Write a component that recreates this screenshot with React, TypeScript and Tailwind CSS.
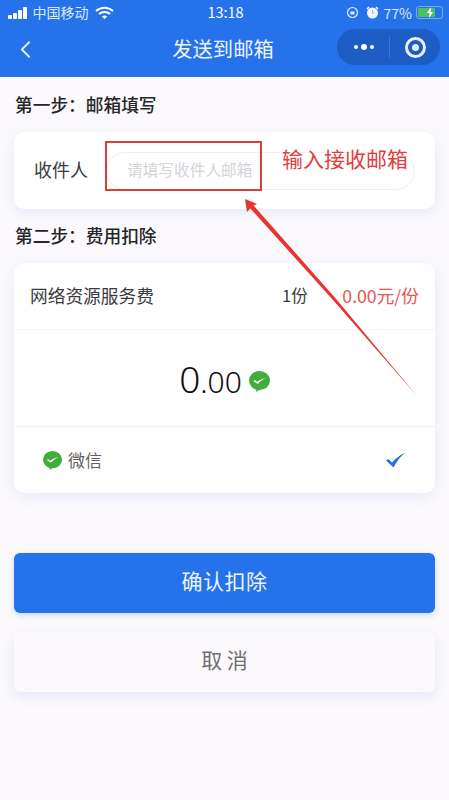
import { ChevronLeft } from "lucide-react";

const font = { fontFamily: '"Noto Sans CJK SC", "Noto Sans", sans-serif' };

function WechatIcon({ size }: { size: number }) {
  return (
    <svg width={size} height={size} viewBox="0 0 22 22" className="shrink-0">
      <ellipse cx="11" cy="10" rx="11" ry="10" fill="#3fae3a" />
      <path d="M8 17l-.5 5 5.500-3.500z" fill="#3fae3a" />
      <path d="M4.500 10.500l1.500-1 2.500 1.800c2.800-2 5.500-3.200 9.500-4.300-3.600 1.800-6.300 3.800-9 6.700z" fill="#fff" />
    </svg>
  );
}

function StatusBar() {
  return (
    <div className="flex h-[25px] items-center justify-between pl-[8px] pr-[6px] text-[14px] leading-none text-[#dce8fc]">
      <div className="flex w-[150px] items-center">
        <div className="flex items-end gap-[1.500px]">
          <span className="h-[4px] w-[3.500px] rounded-[1px] bg-white" />
          <span className="h-[6px] w-[3.500px] rounded-[1px] bg-white" />
          <span className="h-[9px] w-[3.500px] rounded-[1px] bg-white" />
          <span className="h-[12px] w-[3.500px] rounded-[1px] bg-white" />
        </div>
        <span className="ml-[6px] mb-[1px]">中国移动</span>
        <svg width="19" height="14" viewBox="0 0 19 14" className="ml-[6px]">
          <path d="M1 5c5-4.500 12-4.500 17 0M4 8c3-2.700 8-2.700 11 0" fill="none" stroke="#fff" strokeWidth="2" />
          <path d="M6.800 10.500c1.500-1.300 3.900-1.300 5.400 0L9.500 13z" fill="#fff" />
        </svg>
      </div>
      <span className="mb-[1px] text-[14.500px] text-white">13:18</span>
      <div className="flex w-[150px] items-center justify-end">
        <svg width="13" height="13" viewBox="0 0 13 13">
          <circle cx="6.500" cy="6.500" r="5" fill="none" stroke="#e3edfd" strokeWidth="1.200" />
          <rect x="4.500" y="5.500" width="4" height="3" fill="#e3edfd" />
        </svg>
        <svg width="13" height="13" viewBox="0 0 13 13" className="ml-[7px]">
          <circle cx="6.500" cy="7" r="5.500" fill="#f4f7fd" />
          <path d="M6.500 4v3.200h2" fill="none" stroke="#8fb4ee" strokeWidth="1" />
          <path d="M1 3l2-2M12 3l-2-2" stroke="#f4f7fd" strokeWidth="1.500" />
        </svg>
        <span className="ml-[5px]">77%</span>
        <div className="ml-[4px] flex h-[13px] w-[27px] items-center rounded-[3px] border border-[#7fa8ea] p-[1px]">
          <div className="flex h-full w-[17px] items-center justify-end rounded-[1px] bg-[#4cc063] pr-[1px]">
            <svg width="8" height="11" viewBox="0 0 8 11">
              <path d="M5 0L1 6h2.500L3 11l4-6H4.500z" fill="#fff" />
            </svg>
          </div>
        </div>
      </div>
    </div>
  );
}

function NavBar() {
  return (
    <div className="relative flex h-[50px] items-center justify-center pb-[4px] pr-[3px]">
      <ChevronLeft className="absolute left-[11px] top-[10px] h-[29px] w-[29px] text-[#e8f0fd]" strokeWidth={1.500} />
      <span className="text-[20.300px] leading-none text-[#eef4fe]">发送到邮箱</span>
      <div className="absolute right-[9px] top-[4px] flex h-[36px] w-[103px] items-center rounded-full bg-[#1d5cc4]">
        <div className="flex w-[52px] items-center justify-center gap-[3px] pl-[1px]">
          <span className="h-[4px] w-[4px] rounded-full bg-white" />
          <span className="h-[6px] w-[6px] rounded-full bg-white" />
          <span className="h-[4px] w-[4px] rounded-full bg-white" />
        </div>
        <div className="h-[22px] w-px bg-[#3d77d3]" />
        <div className="flex flex-1 items-center justify-center">
          <div className="flex h-[21px] w-[21px] items-center justify-center rounded-full border-[3px] border-[#e8f0fd]">
            <span className="h-[7px] w-[7px] rounded-full bg-[#e8f0fd]" />
          </div>
        </div>
      </div>
    </div>
  );
}

export default function App() {
  return (
    <div className="relative h-[800px] w-[449px] overflow-hidden bg-[#fbf9fc]" style={font}>
      <div className="h-[77px] bg-[#2672ea]">
        <StatusBar />
        <NavBar />
      </div>

      <div className="px-[14px]">
        <h2 className="mt-[18px] h-[18px] pl-[1px] text-[17.700px] font-medium leading-[18px] text-[#26262a]">第一步：邮箱填写</h2>

        <div className="mt-[19px] flex h-[77px] items-center rounded-[10px] bg-white pl-[20px] pr-[20px] shadow-[0_4px_14px_rgba(160,180,235,0.22)]">
          <span className="mb-[3px] w-[54px] shrink-0 text-[18px] leading-none text-[#3a3a3e]">收件人</span>
          <div className="ml-[18px] flex h-[38px] flex-1 items-center rounded-full border border-[#f0eff2] pb-[2px] pl-[20px] text-[15.700px] text-[#d4d3d8]">
            请填写收件人邮箱
          </div>
        </div>

        <h2 className="mt-[17px] h-[18px] pl-[1px] text-[17.700px] font-medium leading-[18px] text-[#26262a]">第二步：费用扣除</h2>

        <div className="mt-[19px] rounded-[10px] bg-white shadow-[0_4px_14px_rgba(160,180,235,0.22)]">
          <div className="flex h-[67px] items-center border-b border-[#f4f3f6] pb-[2px] pl-[16px] pr-[16px] text-[17.700px] text-[#3a3a3e]">
            <span className="flex-1">网络资源服务费</span>
            <span className="w-[59px] text-[16.500px]">1份</span>
            <span className="w-[78px] text-right text-[#e8554f]">0.00元/份</span>
          </div>
          <div className="flex h-[97px] items-center justify-center border-b border-[#f1f0f3]">
            <span className="text-[37px] leading-none text-[#111114]" style={{ fontFamily: '"Noto Sans", sans-serif', fontWeight: 300 }}>
              0<span className="text-[30px]">.00</span>
            </span>
            <span className="ml-[7px] mt-[6px]">
              <WechatIcon size={21} />
            </span>
          </div>
          <div className="flex h-[66px] items-center pl-[29px] pr-[29px]">
            <WechatIcon size={19} />
            <span className="ml-[6px] flex-1 text-[17px] text-[#5f5f63]">微信</span>
            <svg width="20" height="16" viewBox="0 0 20 16">
              <path d="M0 8.500l2.500-1.500 3.500 3.500C9.500 6.500 14 3 19.500.5 14.500 4.500 11 9 7.500 15.500z" fill="#2b72dd" />
            </svg>
          </div>
        </div>

        <button className="mt-[60px] flex h-[60px] w-full items-center justify-center rounded-[6px] bg-[#2672ea] pb-[5px] text-[21px] tracking-[0.5px] text-[#eef4fe] shadow-[0_2px_6px_rgba(60,120,230,0.25)]">
          确认扣除
        </button>
        <button className="mt-[19px] flex h-[60px] w-full items-center justify-center rounded-[6px] bg-[#fbf9fc] pb-[5px] text-[21px] text-[#707074] shadow-[0_4px_12px_rgba(160,180,235,0.25)]">
          取 消
        </button>
      </div>

      {/* annotations drawn over the screenshot */}
      <div className="absolute left-[105px] top-[141px] h-[50px] w-[157px] border-2 border-[#d9403c]" />
      <span className="absolute left-[282px] top-[146px] text-[21px] leading-[24px] text-[#e0403c]">输入接收邮箱</span>
      <svg className="absolute left-0 top-0" width="449" height="800" viewBox="0 0 449 800">
        <path d="M417 396L336.100 299 253.600 205.500 257 204 245 199 247 212 250.400 208.500 333.900 301z" fill="#e8332e" />
      </svg>
    </div>
  );
}
